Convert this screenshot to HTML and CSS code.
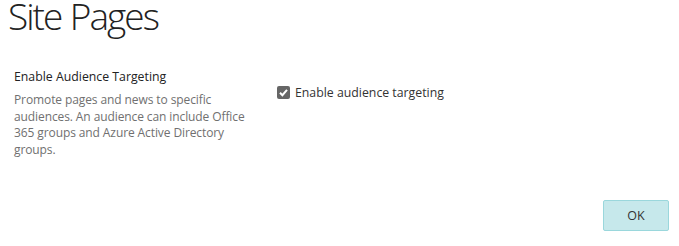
FILE: index.html
```html
<!DOCTYPE html>
<html lang="en">
<head>
    <meta charset="UTF-8">
    <title>Site Pages</title>
    <link rel="stylesheet" href="styles.css">
</head>
<body>

<div class="panel">
    <h1>Site Pages</h1>
    <div class="setting">
        <div class="setting-info">
            <h3>Enable Audience Targeting</h3>
            <p>Promote pages and news to specific audiences. An audience can include Office 365 groups and Azure Active Directory groups.</p>
        </div>
        <label class="check">
            <span class="box">
                <svg width="11" height="11" viewBox="0 0 11 11"><path d="M2 5.8 L4.4 8.2 L9 2.8" fill="none" stroke="#fff" stroke-width="2"/></svg>
            </span>
            Enable audience targeting
        </label>
    </div>
    <div class="actions">
        <button class="ok">OK</button>
    </div>
</div>

</body>
</html>
```

FILE: styles.css
```css
body {
    font-family: 'Open Sans', 'Noto Sans', sans-serif;
    background: #fff;
    color: #333;
    margin: 0;
    padding: 0;
}
.panel {
    width: 679px;
    height: 246px;
    box-sizing: border-box;
    padding: 0 10px 0 8px;
}
h1 {
    font-weight: 300;
    font-size: 37px;
    line-height: 32px;
    margin: 0;
    color: #222;
    letter-spacing: -2px;
    word-spacing: 1px;
}
.setting {
    display: flex;
    margin-top: 36px;
}
.setting-info {
    width: 232px;
    padding-left: 6px;
    margin-right: 31px;
}
h3 {
    font-weight: 400;
    font-size: 12.3px;
    line-height: 18px;
    margin: 0 0 6px 0;
    color: #222;
}
.setting-info p {
    margin: 0;
    font-size: 12px;
    line-height: 16.7px;
    color: #707070;
    letter-spacing: -0.1px;
}
.check {
    display: flex;
    align-items: center;
    gap: 5px;
    font-size: 12.3px;
    color: #333;
    margin-top: 15px;
    height: 18px;
}
.box {
    width: 13px;
    height: 13px;
    background: #666;
    border-radius: 2px;
    display: flex;
    align-items: center;
    justify-content: center;
}
.actions {
    display: flex;
    justify-content: flex-end;
    margin-top: 41px;
}
.ok {
    width: 66px;
    height: 31px;
    background: #c6e8eb;
    border: 1px solid #9ad7dc;
    border-radius: 2px;
    font-family: inherit;
    font-size: 12.5px;
    color: #333;
}
```
